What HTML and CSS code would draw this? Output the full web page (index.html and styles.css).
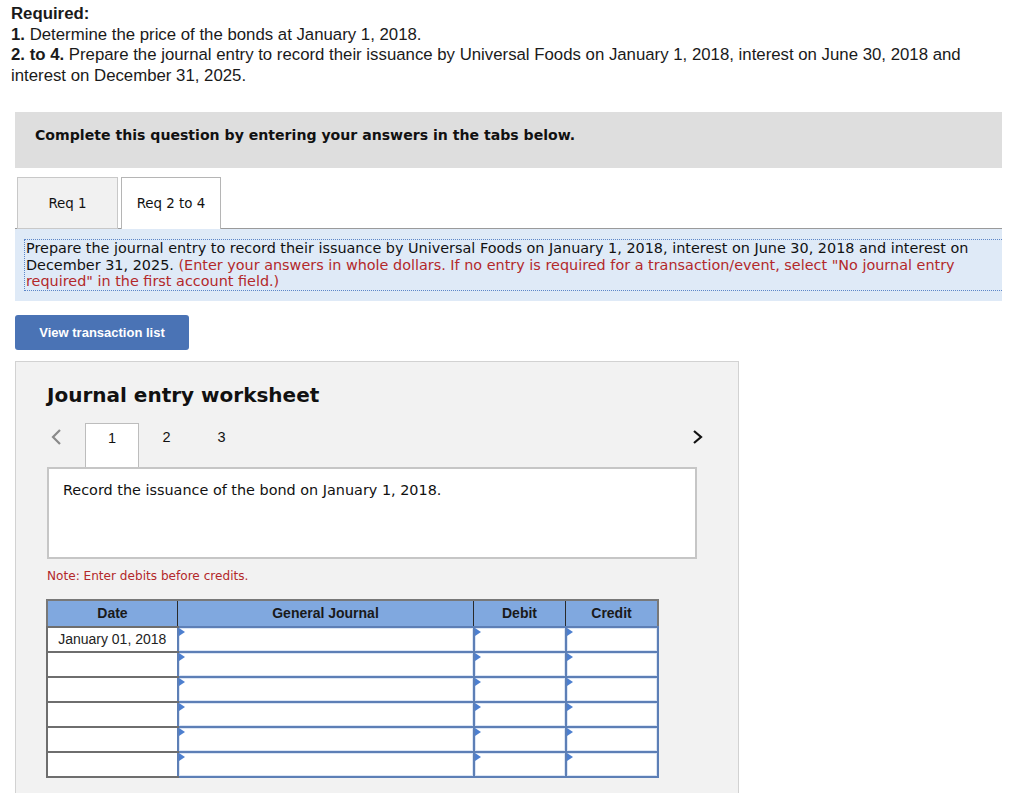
FILE: index.html
```html
<!DOCTYPE html>
<html>
<head>
<meta charset="utf-8">
<link rel="stylesheet" href="styles.css">
</head>
<body>
<div class="required">
  <div><b>Required:</b></div>
  <div><b>1.</b> Determine the price of the bonds at January 1, 2018.</div>
  <div><b>2. to 4.</b> Prepare the journal entry to record their issuance by Universal Foods on January 1, 2018, interest on June 30, 2018 and interest on December 31, 2025.</div>
</div>

<div class="banner">Complete this question by entering your answers in the tabs below.</div>

<div class="tabs">
  <div class="tab">Req 1</div>
  <div class="tab active">Req 2 to 4</div>
</div>

<div class="instructions">
  <div class="dotted">Prepare the journal entry to record their issuance by Universal Foods on January 1, 2018, interest on June 30, 2018 and interest on December 31, 2025. <span class="red">(Enter your answers in whole dollars. If no entry is required for a transaction/event, select "No journal entry required" in the first account field.)</span></div>
</div>

<button class="btn">View transaction list</button>

<div class="panel">
  <h2 class="ws-title">Journal entry worksheet</h2>
  <div class="nav">
    <span class="arrow prev"><svg width="12" height="18" viewBox="0 0 12 18"><path d="M10 2 L3 9 L10 16" fill="none" stroke="#8a8a8a" stroke-width="2.2"/></svg></span>
    <div class="steps">
      <div class="step active">1</div>
      <div class="step">2</div>
      <div class="step">3</div>
    </div>
    <span class="arrow next"><svg width="12" height="18" viewBox="0 0 12 18"><path d="M2 3 L9 9 L2 15" fill="none" stroke="#111" stroke-width="2.2"/></svg></span>
  </div>
  <div class="desc">Record the issuance of the bond on January 1, 2018.</div>
  <div class="note">Note: Enter debits before credits.</div>
  <table class="journal">
    <thead>
      <tr><th class="c-date">Date</th><th class="c-gj">General Journal</th><th class="c-num">Debit</th><th class="c-num">Credit</th></tr>
    </thead>
    <tbody>
      <tr><td class="date">January 01, 2018</td><td class="inp"><div></div></td><td class="inp"><div></div></td><td class="inp"><div></div></td></tr>
      <tr><td class="date"></td><td class="inp"><div></div></td><td class="inp"><div></div></td><td class="inp"><div></div></td></tr>
      <tr><td class="date"></td><td class="inp"><div></div></td><td class="inp"><div></div></td><td class="inp"><div></div></td></tr>
      <tr><td class="date"></td><td class="inp"><div></div></td><td class="inp"><div></div></td><td class="inp"><div></div></td></tr>
      <tr><td class="date"></td><td class="inp"><div></div></td><td class="inp"><div></div></td><td class="inp"><div></div></td></tr>
      <tr><td class="date"></td><td class="inp"><div></div></td><td class="inp"><div></div></td><td class="inp"><div></div></td></tr>
    </tbody>
  </table>
</div>
</body>
</html>
```

FILE: styles.css
```css
html, body { margin: 0; padding: 0; background: #fff; }
body { width: 1024px; overflow: hidden; color: #111; }

.required {
  font-family: "Liberation Sans", Arial, sans-serif;
  font-size: 16.8px;
  line-height: 20.5px;
  padding: 4px 40px 0 11px;
  color: #1a1a1a;
}

.banner {
  margin: 26px 22px 0 15px;
  height: 56px;
  box-sizing: border-box;
  background: #dedede;
  padding: 15px 0 0 20px;
  font-family: "DejaVu Sans", Verdana, sans-serif;
  font-weight: bold;
  font-size: 14.1px;
  line-height: 17px;
  color: #111;
}

.tabs {
  margin: 9px 22px 0 15px;
  display: flex;
  align-items: flex-start;
  gap: 3px;
  padding-left: 2px;
  height: 51px;
  border-bottom: 1px solid #9a9a9a;
}
.tab {
  width: 99px;
  height: 50px;
  border: 1px solid #c8c8c8;
  background: #f1f1f1;
  display: flex;
  align-items: center;
  justify-content: center;
  font-family: "DejaVu Sans", Verdana, sans-serif;
  font-size: 13.4px;
  color: #111;
  box-sizing: content-box;
}
.tab.active {
  width: 98px;
  height: 51px;
  background: #fff;
  border-color: #b5b5b5;
  border-bottom: none;
  position: relative;
  z-index: 1;
}

.instructions {
  margin: 0 22px 0 15px;
  background: #dfeaf7;
  padding: 10px 0 10px 9px;
}
.dotted {
  border-top: 1px dotted #5c86c8;
  border-bottom: 1px dotted #5c86c8;
  border-left: 1px dotted #5c86c8;
  padding: 0 20px 0 1px;
  font-family: "DejaVu Sans", Verdana, sans-serif;
  font-size: 14.4px;
  line-height: 16.5px;
  color: #111;
}
.red { color: #b3282a; }

.btn {
  display: block;
  margin: 14px 0 0 15px;
  width: 174px;
  height: 35px;
  border: none;
  border-radius: 3px;
  background: #4a73b5;
  color: #fff;
  font-family: "Liberation Sans", Arial, sans-serif;
  font-weight: bold;
  font-size: 13px;
  padding: 0;
}

.panel {
  margin: 11px 0 0 15px;
  width: 724px;
  height: 460px;
  background: #f2f2f2;
  border: 1px solid #d2d2d2;
  padding: 0 0 0 31px;
  box-sizing: border-box;
}
.ws-title {
  margin: 0;
  padding-top: 21px;
  height: 44px;
  box-sizing: border-box;
  font-family: "DejaVu Sans", Verdana, sans-serif;
  font-size: 20px;
  font-weight: bold;
  line-height: 24px;
  color: #111;
}
.nav {
  margin-top: 17px;
  width: 660px;
  height: 44px;
  display: flex;
  align-items: flex-start;
  position: relative;
}
.arrow { display: flex; height: 28px; align-items: center; }
.prev { margin-left: 3px; width: 35px; }
.next { position: absolute; left: 645px; top: 0; }
.steps { display: flex; }
.step {
  width: 55px;
  height: 28px;
  display: flex;
  align-items: center;
  justify-content: center;
  font-family: "Liberation Sans", Arial, sans-serif;
  font-size: 14.5px;
  color: #111;
}
.step.active {
  width: 54px;
  height: 44px;
  align-items: flex-start;
  padding-top: 6px;
  box-sizing: border-box;
  background: #fff;
  border: 1px solid #bdbdbd;
  border-bottom: none;
  position: relative;
  z-index: 1;
  margin-bottom: -1px;
}
.desc {
  width: 650px;
  height: 92px;
  box-sizing: border-box;
  background: #fff;
  border: 2px solid #c6c6c6;
  padding: 12px 14px;
  font-family: "DejaVu Sans", Verdana, sans-serif;
  font-size: 14.4px;
  line-height: 18px;
  color: #111;
}
.note {
  margin-top: 10px;
  font-family: "DejaVu Sans", Verdana, sans-serif;
  font-size: 12.1px;
  line-height: 14px;
  color: #b3282a;
}

.journal {
  margin: 16px 0 0 -1px;
  border-collapse: collapse;
  border: 2px solid #787878;
  font-family: "Liberation Sans", Arial, sans-serif;
  font-size: 14px;
  table-layout: fixed;
  width: 610px;
}
.journal th {
  background: #80a8df;
  height: 25px;
  border: 1px solid #2a2a2a;
  font-weight: bold;
  color: #1a1a1a;
  padding: 0;
}
.c-date { width: 129px; }
.c-gj { width: 295px; }
.c-num { width: 91px; }
.journal td {
  height: 23px;
  padding: 0;
  border: 2px solid #6e6e6e;
}
.journal td.date {
  background: #fff;
  text-align: center;
  color: #222;
  border-right: 1px solid #888;
}
.journal td.inp {
  background: #fff;
  border: 2px solid #5d7fb6;
  position: relative;
}
.journal td.inp div {
  height: 21px;
  border: 1px solid #dce6f5;
}
.journal td.inp::before {
  content: "";
  position: absolute;
  left: 0;
  top: 0;
  border-left: 6px solid #4d7fcf;
  border-top: 4px solid transparent;
  border-bottom: 4px solid transparent;
}
```
